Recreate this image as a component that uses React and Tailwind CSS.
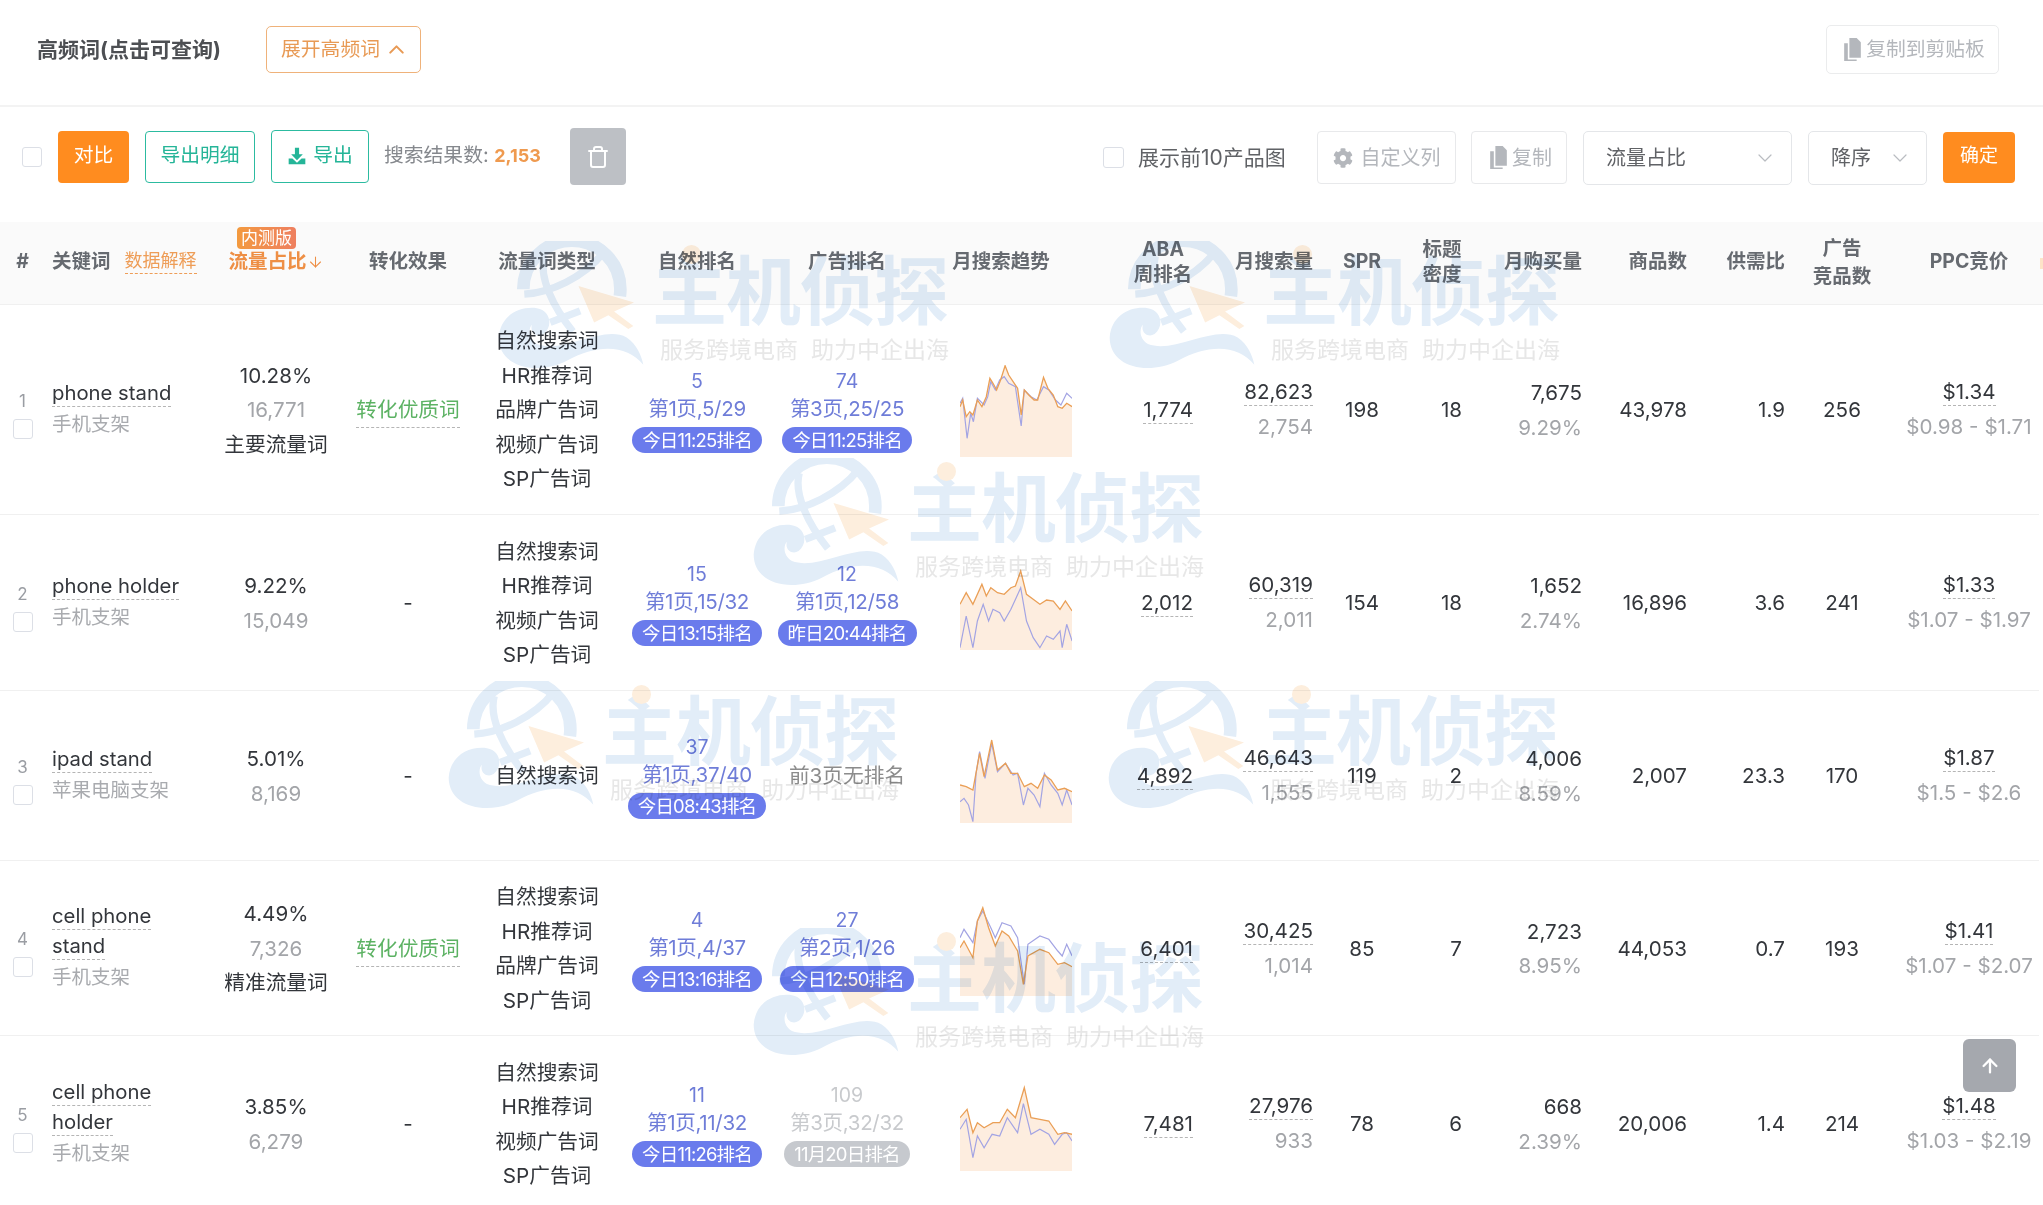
import React from "react";
import { ChevronUp, ChevronDown, ArrowDown, ArrowUp, Trash } from "lucide-react";
import { FaCog } from "react-icons/fa";

const COLS = "grid grid-cols-[45px_163px_136px_128px_150px_150px_150px_188px_83px_120px_98px_51px_120px_105px_98px_114px_140px] w-[2039px]";

const ROWS = [
  {
    h: "h-[210px]", n: 1, kw: ["phone stand"], zh: "手机支架", share: "10.28%", vol: "16,771", tag: "主要流量词", good: true,
    types: ["自然搜索词", "HR推荐词", "品牌广告词", "视频广告词", "SP广告词"],
    nat: { r: "5", p: "第1页,5/29", t: "今日11:25排名" }, ad: { r: "74", p: "第3页,25/25", t: "今日11:25排名" },
    aba: "1,774", ms: "82,623", ms2: "2,754", spr: "198", td: "18", buy: "7,675", buy2: "9.29%", goods: "43,978", sd: "1.9", adg: "256", ppc: "$1.34", ppc2: "$0.98 - $1.71",
    top: 195,
    o: [[806,320],[812,300],[820,350],[828,335],[835,345],[845,300],[855,320],[865,290],[873,235],[880,250],[888,270],[897,240],[907,197],[915,225],[925,245],[935,265],[943,345],[950,270],[960,285],[972,300],[980,300],[993,232],[1003,265],[1015,285],[1025,320],[1035,325],[1045,310],[1057,320]],
    b: [[806,310],[812,295],[822,415],[830,340],[836,365],[845,295],[860,315],[868,290],[875,245],[885,270],[895,240],[905,230],[915,250],[930,260],[943,378],[950,270],[965,290],[978,300],[993,260],[1005,270],[1020,300],[1032,315],[1045,280],[1057,295]],
  },
  {
    h: "h-[176px]", n: 2, kw: ["phone holder"], zh: "手机支架", share: "9.22%", vol: "15,049", good: false,
    types: ["自然搜索词", "HR推荐词", "视频广告词", "SP广告词"],
    nat: { r: "15", p: "第1页,15/32", t: "今日13:15排名" }, ad: { r: "12", p: "第1页,12/58", t: "昨日20:44排名" },
    aba: "2,012", ms: "60,319", ms2: "2,011", spr: "154", td: "18", buy: "1,652", buy2: "2.74%", goods: "16,896", sd: "3.6", adg: "241", ppc: "$1.33", ppc2: "$1.07 - $1.97",
    top: 771,
    o: [[806,910],[820,875],[835,910],[855,850],[865,885],[875,860],[890,875],[905,880],[920,860],[930,855],[942,810],[955,880],[970,895],[985,910],[1000,897],[1015,900],[1030,925],[1042,900],[1057,930]],
    b: [[806,1040],[820,945],[835,1040],[845,960],[858,910],[870,960],[880,925],[895,935],[905,960],[920,925],[932,890],[942,860],[955,960],[970,1010],[985,1040],[1000,1005],[1015,1015],[1030,990],[1035,1040],[1045,970],[1057,1020]],
  },
  {
    h: "h-[170px]", n: 3, kw: ["ipad stand"], zh: "苹果电脑支架", share: "5.01%", vol: "8,169", good: false,
    types: ["自然搜索词"],
    nat: { r: "37", p: "第1页,37/40", t: "今日08:43排名" }, ad: { none: "前3页无排名" },
    aba: "4,892", ms: "46,643", ms2: "1,555", spr: "119", td: "2", buy: "4,006", buy2: "8.59%", goods: "2,007", sd: "23.3", adg: "170", ppc: "$1.87", ppc2: "$1.5 - $2.6",
    top: 153,
    o: [[806,315],[820,320],[835,330],[850,220],[860,290],[877,180],[890,270],[908,250],[920,280],[935,280],[950,320],[965,310],[980,325],[995,285],[1010,300],[1025,330],[1040,325],[1057,335]],
    b: [[806,365],[815,355],[825,375],[835,425],[842,280],[850,215],[862,295],[877,190],[890,275],[908,250],[925,285],[935,280],[948,375],[958,325],[972,345],[985,380],[995,280],[1010,315],[1025,340],[1035,375],[1045,330],[1057,375]],
  },
  {
    h: "h-[175px]", n: 4, kw: ["cell phone", "stand"], zh: "手机支架", share: "4.49%", vol: "7,326", tag: "精准流量词", good: true,
    types: ["自然搜索词", "HR推荐词", "品牌广告词", "SP广告词"],
    nat: { r: "4", p: "第1页,4/37", t: "今日13:16排名" }, ad: { r: "27", p: "第2页,1/26", t: "今日12:50排名" },
    aba: "6,401", ms: "30,425", ms2: "1,014", spr: "85", td: "7", buy: "2,723", buy2: "8.95%", goods: "44,053", sd: "0.7", adg: "193", ppc: "$1.41", ppc2: "$1.07 - $2.07",
    top: 669,
    o: [[806,800],[815,780],[835,830],[845,720],[857,680],[870,740],[885,795],[900,750],[915,765],[935,810],[948,910],[958,825],[985,805],[1005,815],[1025,850],[1040,845],[1057,857]],
    b: [[806,770],[815,745],[835,785],[845,720],[857,690],[875,740],[885,770],[900,725],[920,735],[935,770],[950,910],[958,790],[985,765],[1005,775],[1025,810],[1035,825],[1045,790],[1057,825]],
  },
  {
    h: "h-[176px]", n: 5, kw: ["cell phone", "holder"], zh: "手机支架", share: "3.85%", vol: "6,279", good: false,
    types: ["自然搜索词", "HR推荐词", "视频广告词", "SP广告词"],
    nat: { r: "11", p: "第1页,11/32", t: "今日11:26排名" }, ad: { r: "109", p: "第3页,32/32", t: "11月20日排名", gray: true },
    aba: "7,481", ms: "27,976", ms2: "933", spr: "78", td: "6", buy: "668", buy2: "2.39%", goods: "20,006", sd: "1.4", adg: "214", ppc: "$1.48", ppc2: "$1.03 - $2.19",
    top: 1194,
    o: [[806,1310],[822,1285],[835,1355],[845,1325],[860,1340],[880,1325],[895,1325],[912,1285],[930,1310],[950,1220],[965,1310],[985,1315],[1005,1320],[1025,1360],[1040,1355],[1057,1360]],
    b: [[806,1345],[820,1315],[835,1430],[845,1365],[860,1400],[878,1360],[895,1365],[912,1310],[935,1355],[948,1268],[965,1360],[985,1345],[1005,1360],[1018,1390],[1035,1360],[1045,1355],[1057,1380]],
  },
];

const WATERMARKS = [
  "left-[497px] top-[241px]",
  "left-[1108px] top-[241px]",
  "left-[752px] top-[458px]",
  "left-[447px] top-[681px]",
  "left-[1107px] top-[681px]",
  "left-[752px] top-[928px]",
];

function CopyIcon({ className }) {
  return (
    <svg viewBox="0 0 24 24" className={className} fill="currentColor">
      <path d="M9 1h7l4 4v15H9z" />
      <path d="M4 6h3.500v15.500H16V23H4z" />
    </svg>
  );
}

function DownloadIcon({ className }) {
  return (
    <svg viewBox="0 0 24 24" className={className} fill="currentColor">
      <path d="M9.500 2h5v8H19l-7 7-7-7h4.500z" />
      <path d="M2 15h4.500l5.500 5 5.500-5H22v7H2z" />
    </svg>
  );
}

function Sparkline({ row }) {
  const pt = ([x, y]) => `${((x - 806) / 2.24).toFixed(1)},${((y - row.top) / 3).toFixed(1)}`;
  const o = row.o.map(pt).join(" ");
  const b = row.b.map(pt).join(" ");
  return (
    <svg viewBox="0 0 112 92" className="w-[112px] h-[92px]">
      <polygon points={`0,92 ${o} 112,92`} fill="#fdeddf" />
      <polyline points={b} fill="none" stroke="#a3a4e3" strokeWidth="1.2" />
      <polyline points={o} fill="none" stroke="#ea9f56" strokeWidth="1.3" />
    </svg>
  );
}

function Dash({ children, className = "" }) {
  return <span className={`inline-block leading-[26px] border-b border-dashed border-[#b5b5b5] ${className}`}>{children}</span>;
}

function Rank({ d }) {
  if (d.none) return <div className="flex items-center justify-center text-[20.700px] text-[#8c8c8c] whitespace-nowrap">{d.none}</div>;
  const text = d.gray ? "text-[#c8cacd]" : "text-[#6f7dd8]";
  const pill = d.gray ? "bg-[#c6c9ce]" : "bg-[#6a7bec]";
  return (
    <div className={`flex flex-col items-center ${text}`}>
      <div className="text-[19.500px] leading-[27px]">{d.r}</div>
      <div className="text-[20.500px] leading-[27px] whitespace-nowrap tracking-[-0.3px]">{d.p}</div>
      <div className={`mt-[5px] ${pill} text-white text-[18.500px] leading-[26px] h-[26px] px-[10px] rounded-[13px] whitespace-nowrap tracking-[-0.8px]`}>{d.t}</div>
    </div>
  );
}

function Logo({ pos }) {
  return (
    <div className={`absolute ${pos} w-[451px] h-[125px]`}>
      <svg viewBox="30 20 445 385" className="absolute left-0 top-0 w-[148px] h-[128px]">
        <circle cx="255" cy="165" r="146" fill="none" stroke="#e2edf8" strokeWidth="38" strokeDasharray="480 437" strokeDashoffset="-458" />
        <path d="M112 180 C190 175 290 130 350 55" fill="none" stroke="#e2edf8" strokeWidth="22" />
        <path d="M172 65 C155 130 200 220 258 292" fill="none" stroke="#e2edf8" strokeWidth="22" />
        <path d="M190 265 L280 230" fill="none" stroke="#e2edf8" strokeWidth="22" />
        <path d="M35 310 C40 245 95 215 150 222 C190 228 200 275 170 300 C150 312 128 295 135 272 C125 282 122 312 150 330 C230 360 350 270 420 310 C450 330 465 365 470 392 C420 330 330 330 240 380 C150 425 35 400 35 310Z" fill="#e2edf8" />
        <path d="M275 155 L442 205 L382 232 L440 276 L425 285 L365 243 L322 265Z" fill="#fdeedd" />
      </svg>
      <span className="absolute left-[155px] top-[-9px] text-[75px] leading-[120px] font-bold text-[#e2edf8] whitespace-nowrap tracking-[-1px]">主机侦探</span>
      <span className="absolute left-[185px] top-[4px] w-[19px] h-[19px] rounded-full bg-[#fdeedd]" />
      <span className="absolute left-[163px] top-[96px] text-[23px] leading-[26px] text-[#e7e7e7] whitespace-nowrap">服务跨境电商&nbsp;&nbsp;助力中企出海</span>
    </div>
  );
}

function HeadCell({ children, className = "" }) {
  return <div className={`flex items-center font-bold text-[#666a70] text-[19.500px] leading-[25px] pb-[3px] ${className}`}>{children}</div>;
}

export default function App() {
  return (
    <div className="relative w-[2043px] h-[1205px] overflow-hidden bg-white font-['Inter','Noto_Sans_CJK_SC',sans-serif] text-[20.600px] text-[#33363b]">
      {/* top bar */}
      <div className="flex items-center justify-between h-[107px] pl-[37px] pr-[44px] pb-[6px] border-b-2 border-[#f3f3f3]">
        <div className="flex items-center">
          <div className="w-[229px] text-[21px] font-bold text-[#4d4f53] whitespace-nowrap">高频词(点击可查询)</div>
          <button className="flex items-center justify-center gap-[4px] w-[155px] h-[47px] pl-[3px] rounded-[5px] border border-[#efb27a] text-[#e89a55] text-[19.800px]">
            展开高频词
            <ChevronUp className="w-[25px] h-[25px]" strokeWidth={2} />
          </button>
        </div>
        <button className="flex items-center justify-center gap-[1px] w-[173px] h-[49px] rounded-[5px] border border-[#ebeced] text-[#b4b7bc] text-[19.800px] whitespace-nowrap">
          <CopyIcon className="w-[25px] h-[25px]" />
          复制到剪贴板
        </button>
      </div>

      {/* toolbar */}
      <div className="flex items-start justify-between h-[115px] pt-[21px] pl-[22px] pr-[28px]">
        <div className="flex items-center h-[57px]">
          <div className="w-[20px] h-[20px] rounded-[3px] border border-[#dcdfe6]" />
          <button className="ml-[16px] w-[71px] h-[52px] pb-[1px] rounded-[4px] bg-[#ff8c1f] text-white text-[19.800px]">对比</button>
          <button className="ml-[16px] w-[110px] h-[52px] pb-[1px] rounded-[4px] border border-[#2cbba0] text-[#25b598] text-[19.800px]">导出明细</button>
          <button className="ml-[16px] flex items-center justify-center gap-[6px] w-[98px] h-[53px] pb-[1px] rounded-[4px] border border-[#2cbba0] text-[#25b598] text-[19.800px]">
            <DownloadIcon className="w-[20px] h-[20px]" />
            导出
          </button>
          <div className="ml-[15px] w-[186px] pb-[1px] text-[19.800px] text-[#85888d] whitespace-nowrap">
            搜索结果数: <span className="font-bold text-[18px] text-[#ef9a4f]">2,153</span>
          </div>
          <button className="flex items-center justify-center w-[56px] h-[57px] rounded-[4px] bg-[#bdc0c5] text-white">
            <Trash className="w-[24px] h-[24px]" strokeWidth={2} />
          </button>
        </div>
        <div className="flex items-center h-[57px] mt-[1px] text-[20px]">
          <div className="w-[21px] h-[21px] rounded-[3px] border border-[#dcdfe6]" />
          <div className="ml-[14px] w-[179px] text-[21px] text-[#606266] whitespace-nowrap">展示前10产品图</div>
          <button className="flex items-center justify-center gap-[8px] w-[139px] h-[53px] rounded-[4px] border border-[#e8e9eb] text-[#b4b7bc] whitespace-nowrap">
            <FaCog className="w-[20px] h-[20px]" />
            自定义列
          </button>
          <button className="ml-[15px] flex items-center justify-center gap-[1px] w-[96px] h-[53px] rounded-[4px] border border-[#e8e9eb] text-[#b4b7bc]">
            <CopyIcon className="w-[25px] h-[25px]" />
            复制
          </button>
          <div className="ml-[16px] flex items-center justify-between pl-[22px] pr-[14px] w-[209px] h-[54px] rounded-[5px] border border-[#e4e6e9] text-[#606266]">
            流量占比
            <ChevronDown className="w-[24px] h-[24px] text-[#b9bcc1]" strokeWidth={1.2} />
          </div>
          <div className="ml-[16px] flex items-center justify-between pl-[22px] pr-[14px] w-[119px] h-[54px] rounded-[5px] border border-[#e4e6e9] text-[#606266]">
            降序
            <ChevronDown className="w-[24px] h-[24px] text-[#b9bcc1]" strokeWidth={1.2} />
          </div>
          <button className="ml-[16px] w-[72px] h-[51px] pb-[3px] rounded-[4px] bg-[#ff8c1f] text-white text-[19px]">确定</button>
        </div>
      </div>

      {/* table header */}
      <div className="relative h-[83px] bg-[#fafafa] border-b border-[#f0f0f0]">
        <div className={`${COLS} h-full`}>
          <HeadCell className="justify-center">#</HeadCell>
          <HeadCell className="pl-[7px] gap-[14px]">
            关键词
            <span className="font-normal text-[18px] text-[#ee9d57] leading-[24px] border-b border-dashed border-[#ee9d57] whitespace-nowrap">数据解释</span>
          </HeadCell>
          <HeadCell className="relative justify-center text-[#ee8f45]">
            <span className="absolute left-[29px] top-[5px] w-[59px] h-[22px] rounded-[4px] bg-gradient-to-r from-[#f39a3e] to-[#ee7f5f] text-white font-normal text-[17px] leading-[22px] text-center whitespace-nowrap">内测版</span>
            <span className="whitespace-nowrap">流量占比</span>
            <ArrowDown className="w-[17px] h-[20px]" strokeWidth={1.5} />
          </HeadCell>
          <HeadCell className="justify-center">转化效果</HeadCell>
          <HeadCell className="justify-center">流量词类型</HeadCell>
          <HeadCell className="justify-center">自然排名</HeadCell>
          <HeadCell className="justify-center">广告排名</HeadCell>
          <HeadCell className="justify-center pr-[30px]">月搜索趋势</HeadCell>
          <HeadCell className="justify-end"><span className="w-[60px] text-center">ABA<br />周排名</span></HeadCell>
          <HeadCell className="justify-end">月搜索量</HeadCell>
          <HeadCell className="justify-center">SPR</HeadCell>
          <HeadCell className="justify-end"><span className="w-[40px] text-center">标题<br />密度</span></HeadCell>
          <HeadCell className="justify-end">月购买量</HeadCell>
          <HeadCell className="justify-end">商品数</HeadCell>
          <HeadCell className="justify-end">供需比</HeadCell>
          <HeadCell className="justify-center text-center !leading-[28px]">广告<br />竞品数</HeadCell>
          <HeadCell className="justify-center">PPC竞价</HeadCell>
        </div>
        <span className="absolute right-0 top-[36px] w-[3px] h-[11px] bg-[#fde3c8]" />
      </div>

      {/* rows */}
      {ROWS.map((r) => (
        <div key={r.n} className={`${COLS} ${r.h} pt-[2px] border-b border-[#f0f0f0] leading-[34.500px]`}>
          <div className="flex flex-col items-center justify-center pt-[6px]">
            <div className="text-[17px] leading-[24px] text-[#9a9da3]">{r.n}</div>
            <div className="mt-[6px] w-[20px] h-[20px] rounded-[3px] border border-[#dcdfe6]" />
          </div>
          <div className="flex flex-col items-start justify-center pl-[7px] pb-[4px] leading-[28px]">
            {r.kw.map((k) => (
              <Dash key={k} className="text-[20.300px] mb-[3px] whitespace-nowrap">{k}</Dash>
            ))}
            <div className="text-[19.500px] text-[#a9abaf] whitespace-nowrap">{r.zh}</div>
          </div>
          <div className="flex flex-col items-center justify-center">
            <div>{r.share}</div>
            <div className="text-[#a3a5a9]">{r.vol}</div>
            {r.tag && <div className="text-[20.700px] whitespace-nowrap">{r.tag}</div>}
          </div>
          <div className="flex items-center justify-center">
            {r.good ? <Dash className="text-[20.700px] text-[#5cb263] !leading-[34px] whitespace-nowrap">转化优质词</Dash> : "-"}
          </div>
          <div className="flex flex-col items-center justify-center text-[20.700px]">
            {r.types.map((t) => <div key={t} className="whitespace-nowrap">{t}</div>)}
          </div>
          <div className="flex items-center justify-center"><Rank d={r.nat} /></div>
          <div className="flex items-center justify-center"><Rank d={r.ad} /></div>
          <div className="flex items-center justify-center pt-[1px]"><Sparkline row={r} /></div>
          <div className="flex items-center justify-end"><Dash>{r.aba}</Dash></div>
          <div className="flex flex-col items-end justify-center pt-[3px]">
            <Dash>{r.ms}</Dash>
            <div className="text-[#a3a5a9] mt-[4px]">{r.ms2}</div>
          </div>
          <div className="flex items-center justify-center">{r.spr}</div>
          <div className="flex items-center justify-end">{r.td}</div>
          <div className="flex flex-col items-end justify-center">
            <div>{r.buy}</div>
            <div className="text-[#a3a5a9]">{r.buy2}</div>
          </div>
          <div className="flex items-center justify-end">{r.goods}</div>
          <div className="flex items-center justify-end">{r.sd}</div>
          <div className="flex items-center justify-center">{r.adg}</div>
          <div className="flex flex-col items-center justify-center pt-[3px]">
            <Dash>{r.ppc}</Dash>
            <div className="text-[#a3a5a9] mt-[4px] whitespace-nowrap">{r.ppc2}</div>
          </div>
        </div>
      ))}

      {/* watermarks over the table */}
      <div className="absolute inset-0 pointer-events-none mix-blend-multiply">
        {WATERMARKS.map((p) => <Logo key={p} pos={p} />)}
      </div>

      {/* back to top */}
      <button className="absolute left-[1963px] top-[1039px] flex items-center justify-center w-[53px] h-[53px] rounded-[6px] bg-[#a5a8ae] text-white">
        <ArrowUp className="w-[22px] h-[22px]" strokeWidth={2.5} />
      </button>
    </div>
  );
}
